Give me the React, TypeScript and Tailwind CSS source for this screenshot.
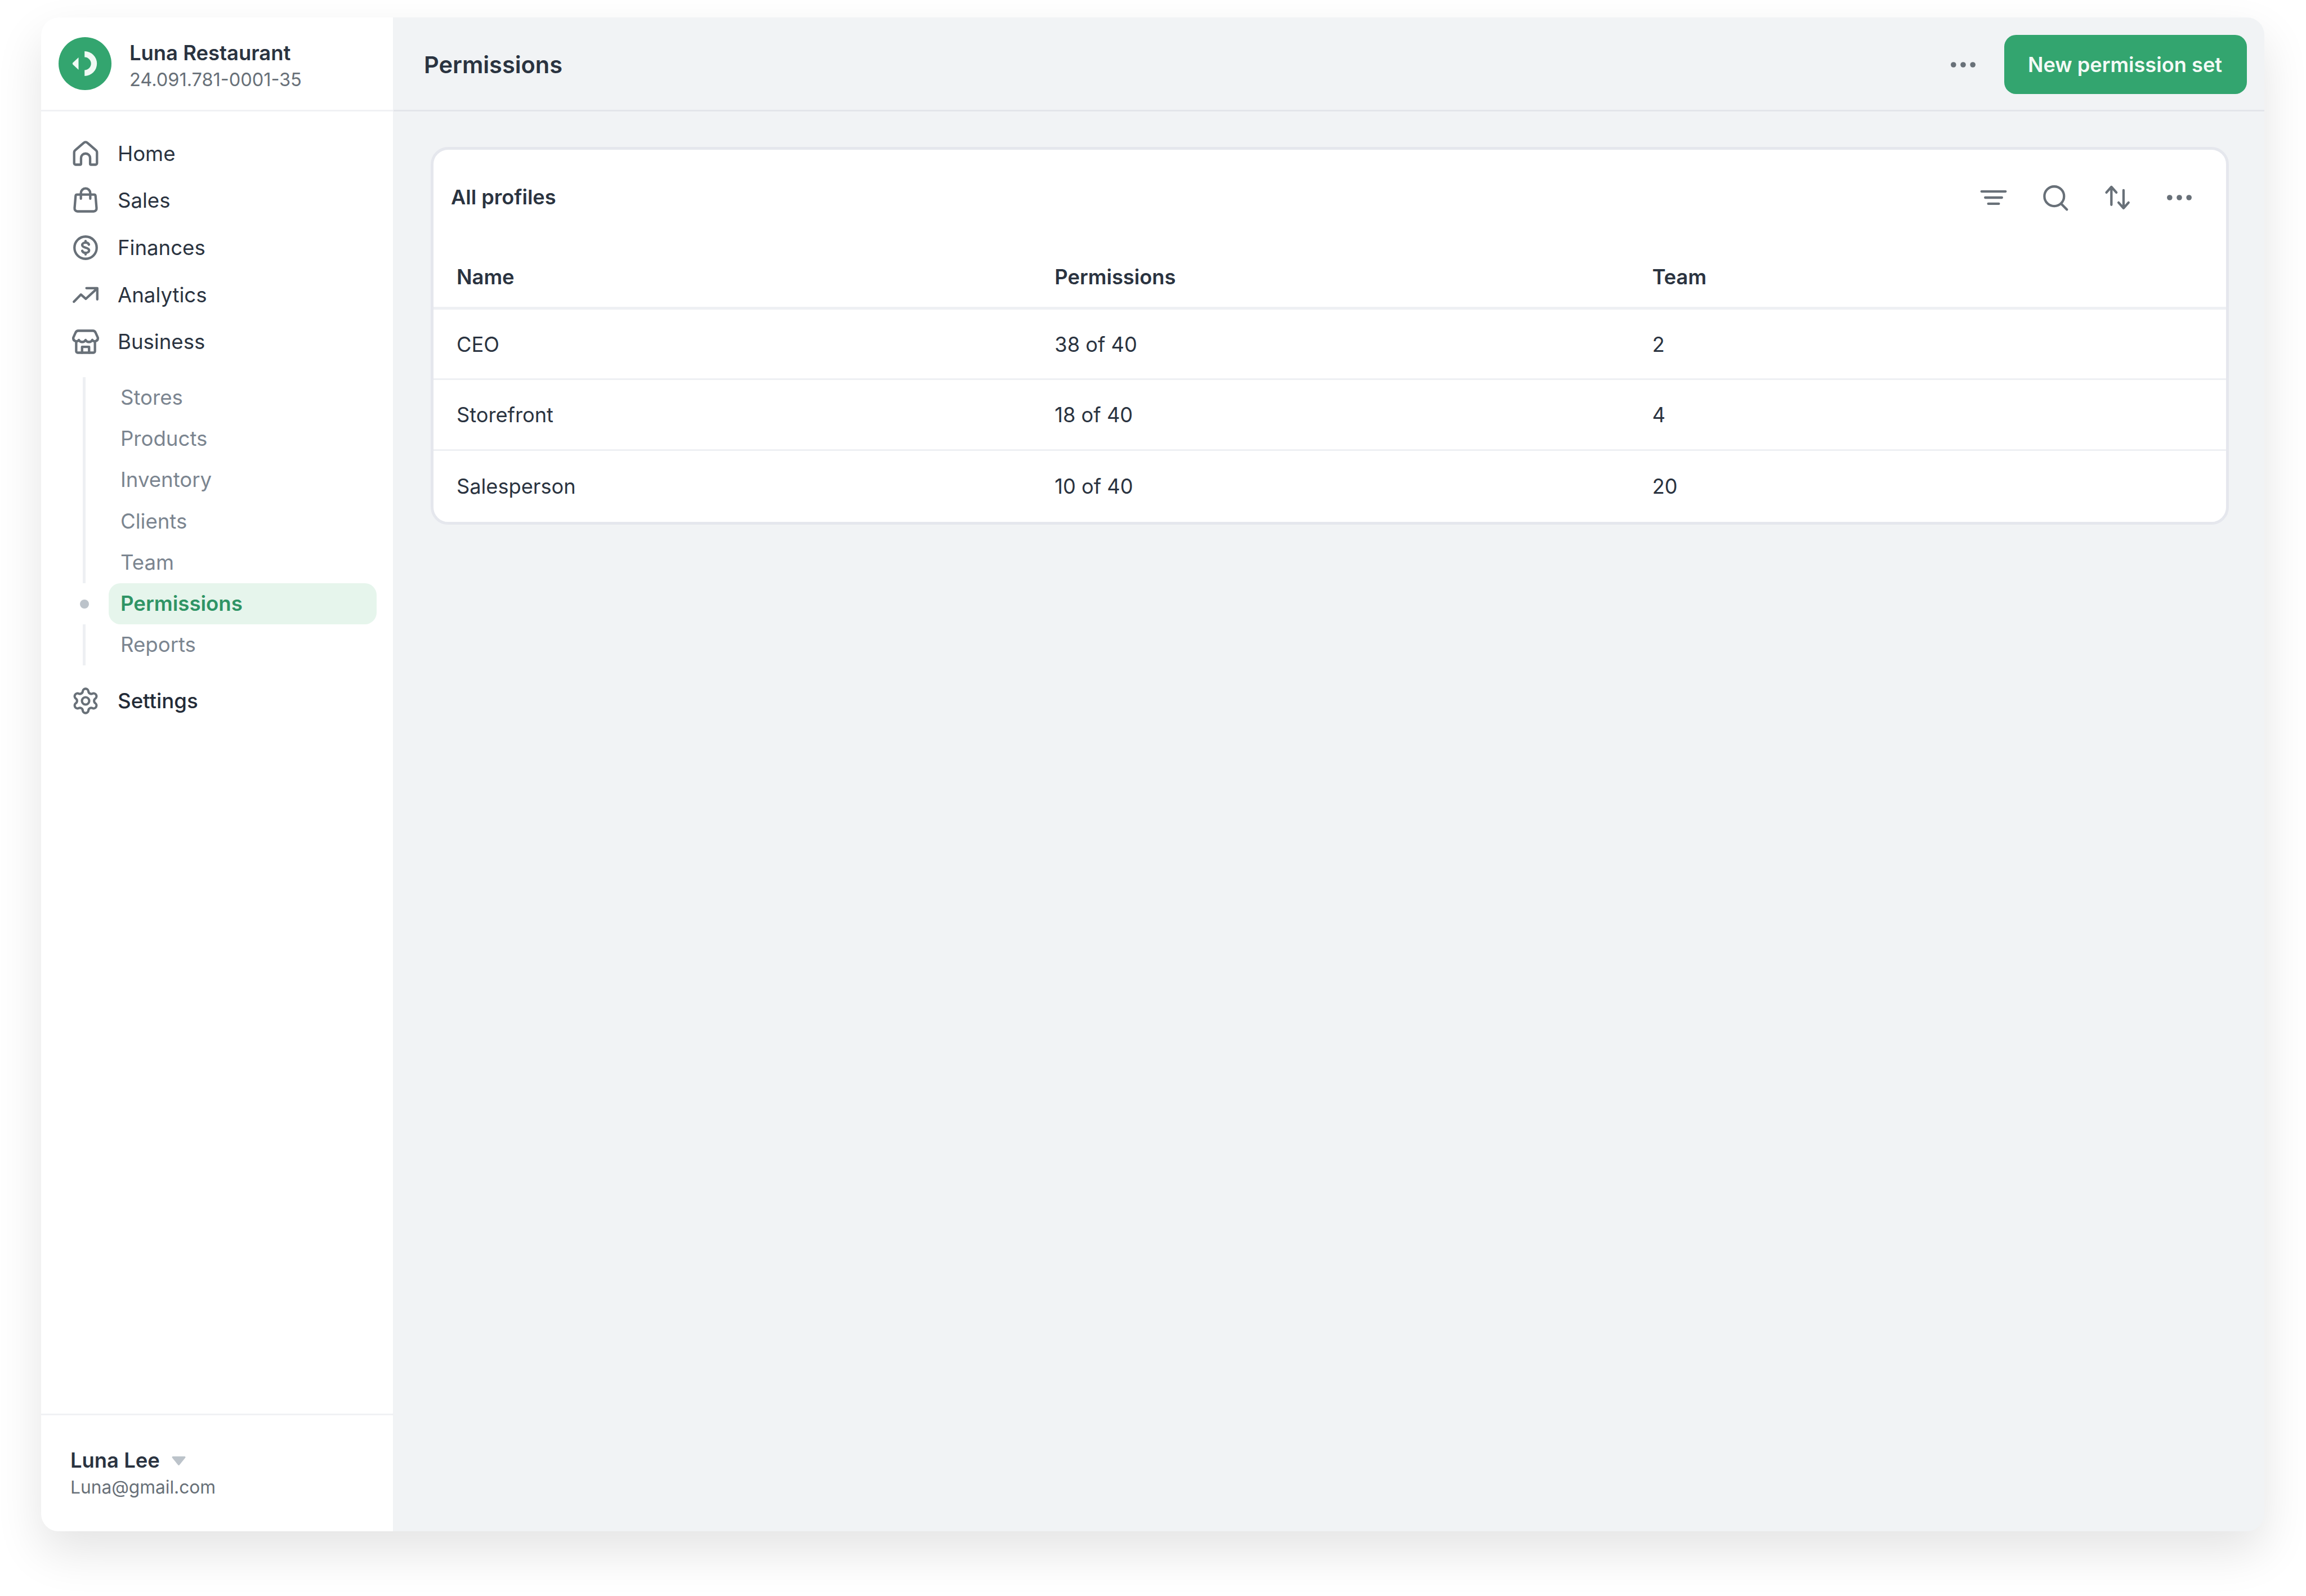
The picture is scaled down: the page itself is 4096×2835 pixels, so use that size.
import React from "react";
import { Settings } from "lucide-react";

const I = ({ children, cls = "w-[52px] h-[52px]" }: { children: React.ReactNode; cls?: string }) => (
  <svg viewBox="0 0 20 20" fill="none" stroke="#687078" strokeWidth={1.65} strokeLinecap="round" strokeLinejoin="round" className={cls + " shrink-0"}>
    {children}
  </svg>
);

const Dots = () => (
  <svg viewBox="0 0 20 20" fill="#687078" className="w-[52px] h-[52px] shrink-0">
    <circle cx="3.4" cy="10" r="1.85" />
    <circle cx="10" cy="10" r="1.85" />
    <circle cx="16.6" cy="10" r="1.85" />
  </svg>
);

const nav: [string, React.ReactNode][] = [
  ["Home", <I><path d="M2.2 9.1a2 2 0 0 1 .7-1.5L8.7 2.6a2 2 0 0 1 2.6 0l5.8 5a2 2 0 0 1 .7 1.5v7.4a1 1 0 0 1-1 1h-3a.7.7 0 0 1-.7-.7V13a3 3 0 0 0-6.2 0v3.8a.7.7 0 0 1-.7.7h-3a1 1 0 0 1-1-1Z" /></I>],
  ["Sales", <I><path d="M4.2 6h11.6a1 1 0 0 1 1 .9l.7 8.4a2 2 0 0 1-2 2.2H4.5a2 2 0 0 1-2-2.2l.7-8.4a1 1 0 0 1 1-.9Z" /><path d="M6.8 8.8V5a3.2 3.2 0 0 1 6.4 0v3.8" /></I>],
  ["Finances", <I><circle cx="10" cy="10" r="7.6" /><path d="M12.3 7.9c-.3-.9-1.2-1.4-2.3-1.4-1.3 0-2.3.7-2.3 1.7 0 2.4 4.7 1.2 4.7 3.6 0 1-1 1.7-2.4 1.7-1.1 0-2-.5-2.3-1.4M10 5.4v1.1M10 13.5v1.1" /></I>],
  ["Analytics", <I><path d="M2 14.6 6.8 9.7l3.4 2.9 7.6-7" /><path d="M10.6 5.3H18V13" /></I>],
  ["Business", <I><path d="M5 2.5h10a2 2 0 0 1 1.8 1.2l1.6 3.6a2.1 2.1 0 0 1-3.8 1.5 2.6 2.6 0 0 1-4.6 0 2.6 2.6 0 0 1-4.6 0 2.1 2.1 0 0 1-3.8-1.5l1.6-3.6A2 2 0 0 1 5 2.5Z" /><path d="M3.6 10v6.5a1 1 0 0 0 1 1h10.8a1 1 0 0 0 1-1V10" /><path d="M7.6 17.5v-4h4.8v4" /></I>],
];

const subs = ["Stores", "Products", "Inventory", "Clients", "Team", "Permissions", "Reports"];

const rows = [
  ["CEO", "38 of 40", "2"],
  ["Storefront", "18 of 40", "4"],
  ["Salesperson", "10 of 40", "20"],
];

const NavRow = ({ label, icon, cls = "" }: { label: string; icon: React.ReactNode; cls?: string }) => (
  <div className={"flex items-center h-[83.6px] pl-[53px] gap-[31px] text-[36.6px] leading-[52px] text-[#2a3340] " + cls}>
    {icon}
    <span>{label}</span>
  </div>
);

export default function App() {
  return (
    <div className="w-[4096px] h-[2835px] bg-white pl-[73px] pt-[31px] overflow-hidden font-['Inter',sans-serif]">
      <div className="flex w-[3949px] h-[2689px] rounded-[31px] overflow-hidden bg-[#f1f3f5] shadow-[0_36px_84px_rgba(0,0,0,0.11)]">
        <aside className="w-[626px] h-full bg-white flex flex-col shrink-0 border-r border-[#f0f1f4]">
          <div className="h-[167px] flex items-center pl-[31px] gap-[32px] border-b-[3px] border-[#f0f1f4] shrink-0">
            <svg viewBox="0 0 36 36" className="w-[94px] h-[94px] shrink-0">
              <circle cx="18" cy="18" r="18" fill="#33a56f" />
              <path d="M17.7 9.6A8.4 8.4 0 0 1 17.7 26.4V22.4A4.4 4.4 0 0 0 17.7 13.6Z" fill="#f0f9f4" />
              <path d="M13.6 13.8V22.2L9.8 18.7a1 1 0 0 1 0-1.4Z" fill="#f0f9f4" />
            </svg>
            <div className="flex flex-col pt-[9px]">
              <span className="text-[36.4px] leading-[47px] font-[560] text-[#2a3340]">Luna Restaurant</span>
              <span className="text-[32.5px] leading-[47px] text-[#687078]">24.091.781-0001-35</span>
            </div>
          </div>
          <nav className="pt-[33px] flex-1">
            {nav.map(([l, ic]) => (
              <NavRow key={l} label={l} icon={ic} />
            ))}
            <div className="mt-[21px] mb-[21px]">
              {subs.map((s) => {
                const active = s === "Permissions";
                return (
                  <div key={s} className="flex h-[73.2px] pl-[59.5px] pr-[29px]">
                    <div className="w-[34px] shrink-0 flex items-center justify-center">
                      {active ? (
                        <div className="w-[16px] h-[16px] rounded-full bg-[#bcc3ca]" />
                      ) : (
                        <div className="w-[5px] h-full bg-[#eef0f3]" />
                      )}
                    </div>
                    <div
                      className={
                        "ml-[26.5px] flex-1 flex items-center pl-[21px] rounded-[21px] text-[36.6px] " +
                        (active ? "bg-[#e6f5ec] text-[#2f9465] font-[560]" : "text-[#7b8590]")
                      }
                    >
                      {s}
                    </div>
                  </div>
                );
              })}
            </div>
            <NavRow label="Settings" cls="font-medium text-[#232b37]" icon={<Settings size={52} color="#687078" strokeWidth={1.9} className="shrink-0" />} />
          </nav>
          <div className="h-[209px] shrink-0 border-t-[3px] border-[#f0f1f4] pl-[52px] pt-[57px]">
            <div className="flex items-center gap-[21px] text-[36.4px] leading-[47px] font-[560] text-[#2a3340]">
              <span>Luna Lee</span>
              <svg viewBox="0 0 10 6.4" className="w-[25px] h-[16px]">
                <path d="M.8 0h8.4a.6.6 0 0 1 .5.9L5.5 6.1a.6.6 0 0 1-1 0L.3.9A.6.6 0 0 1 .8 0Z" fill="#bcc3ca" />
              </svg>
            </div>
            <div className="text-[31.7px] leading-[47px] text-[#687078]">Luna@gmail.com</div>
          </div>
        </aside>
        <main className="flex-1 min-w-0 flex flex-col">
          <header className="h-[167px] shrink-0 border-b-[3px] border-[#e3e5ea] flex items-center pl-[54px] pr-[31px] pt-[3px]">
            <h1 className="text-[41.5px] font-[560] text-[#2a3340] flex-1 pt-[2px]">Permissions</h1>
            <Dots />
            <button className="ml-[47px] w-[431px] h-[104.5px] rounded-[21px] bg-[#33a56f] text-[#f3faf6] text-[36.2px] font-[560] flex items-center justify-center pt-[2px] pr-[2px]">
              New permission set
            </button>
          </header>
          <div className="pl-[66px] pr-[63px] pt-[63px]">
            <section className="bg-white rounded-[31px] border-[5px] border-[#e5e7ed] overflow-hidden">
              <div className="h-[169px] flex items-center pl-[31px] pr-[57px]">
                <span className="flex-1 text-[36.1px] font-semibold text-[#2a3340]">All profiles</span>
                <div className="flex items-center gap-[58px]">
                  <I><path d="M1.8 5.8h16.4M4.3 10h11.4M6.4 14.2h7.2" /></I>
                  <I><circle cx="9.15" cy="9.1" r="6.7" /><path d="M13.9 14.2l3.9 4" /></I>
                  <I><path d="M5.9 14.9V2.7M2.5 6.5l3.4-3.8 3.4 3.8M14.2 5v12.2M10.8 13.4l3.4 3.8 3.4-3.8" /></I>
                  <Dots />
                </div>
              </div>
              <div className="grid grid-cols-3 h-[115px] pt-[4px] border-b-[5px] border-[#eef0f3] text-[36.3px] font-semibold text-[#2a3340] items-center">
                <div className="pl-[41px]">Name</div>
                <div className="pl-[42px]">Permissions</div>
                <div className="pl-[42px]">Team</div>
              </div>
              {rows.map((r, i) => (
                <div key={r[0]} className={"grid grid-cols-3 items-center text-[36.2px] text-[#2a3340] " + (i < 2 ? "pt-[2px] h-[125.4px] border-b-[3px] border-[#eef0f3]" : "h-[126px]")}>
                  {r.map((c, j) => (
                    <div key={c} className={j === 0 ? "pl-[41px]" : "pl-[42px]"}>{c}</div>
                  ))}
                </div>
              ))}
            </section>
          </div>
        </main>
      </div>
    </div>
  );
}
